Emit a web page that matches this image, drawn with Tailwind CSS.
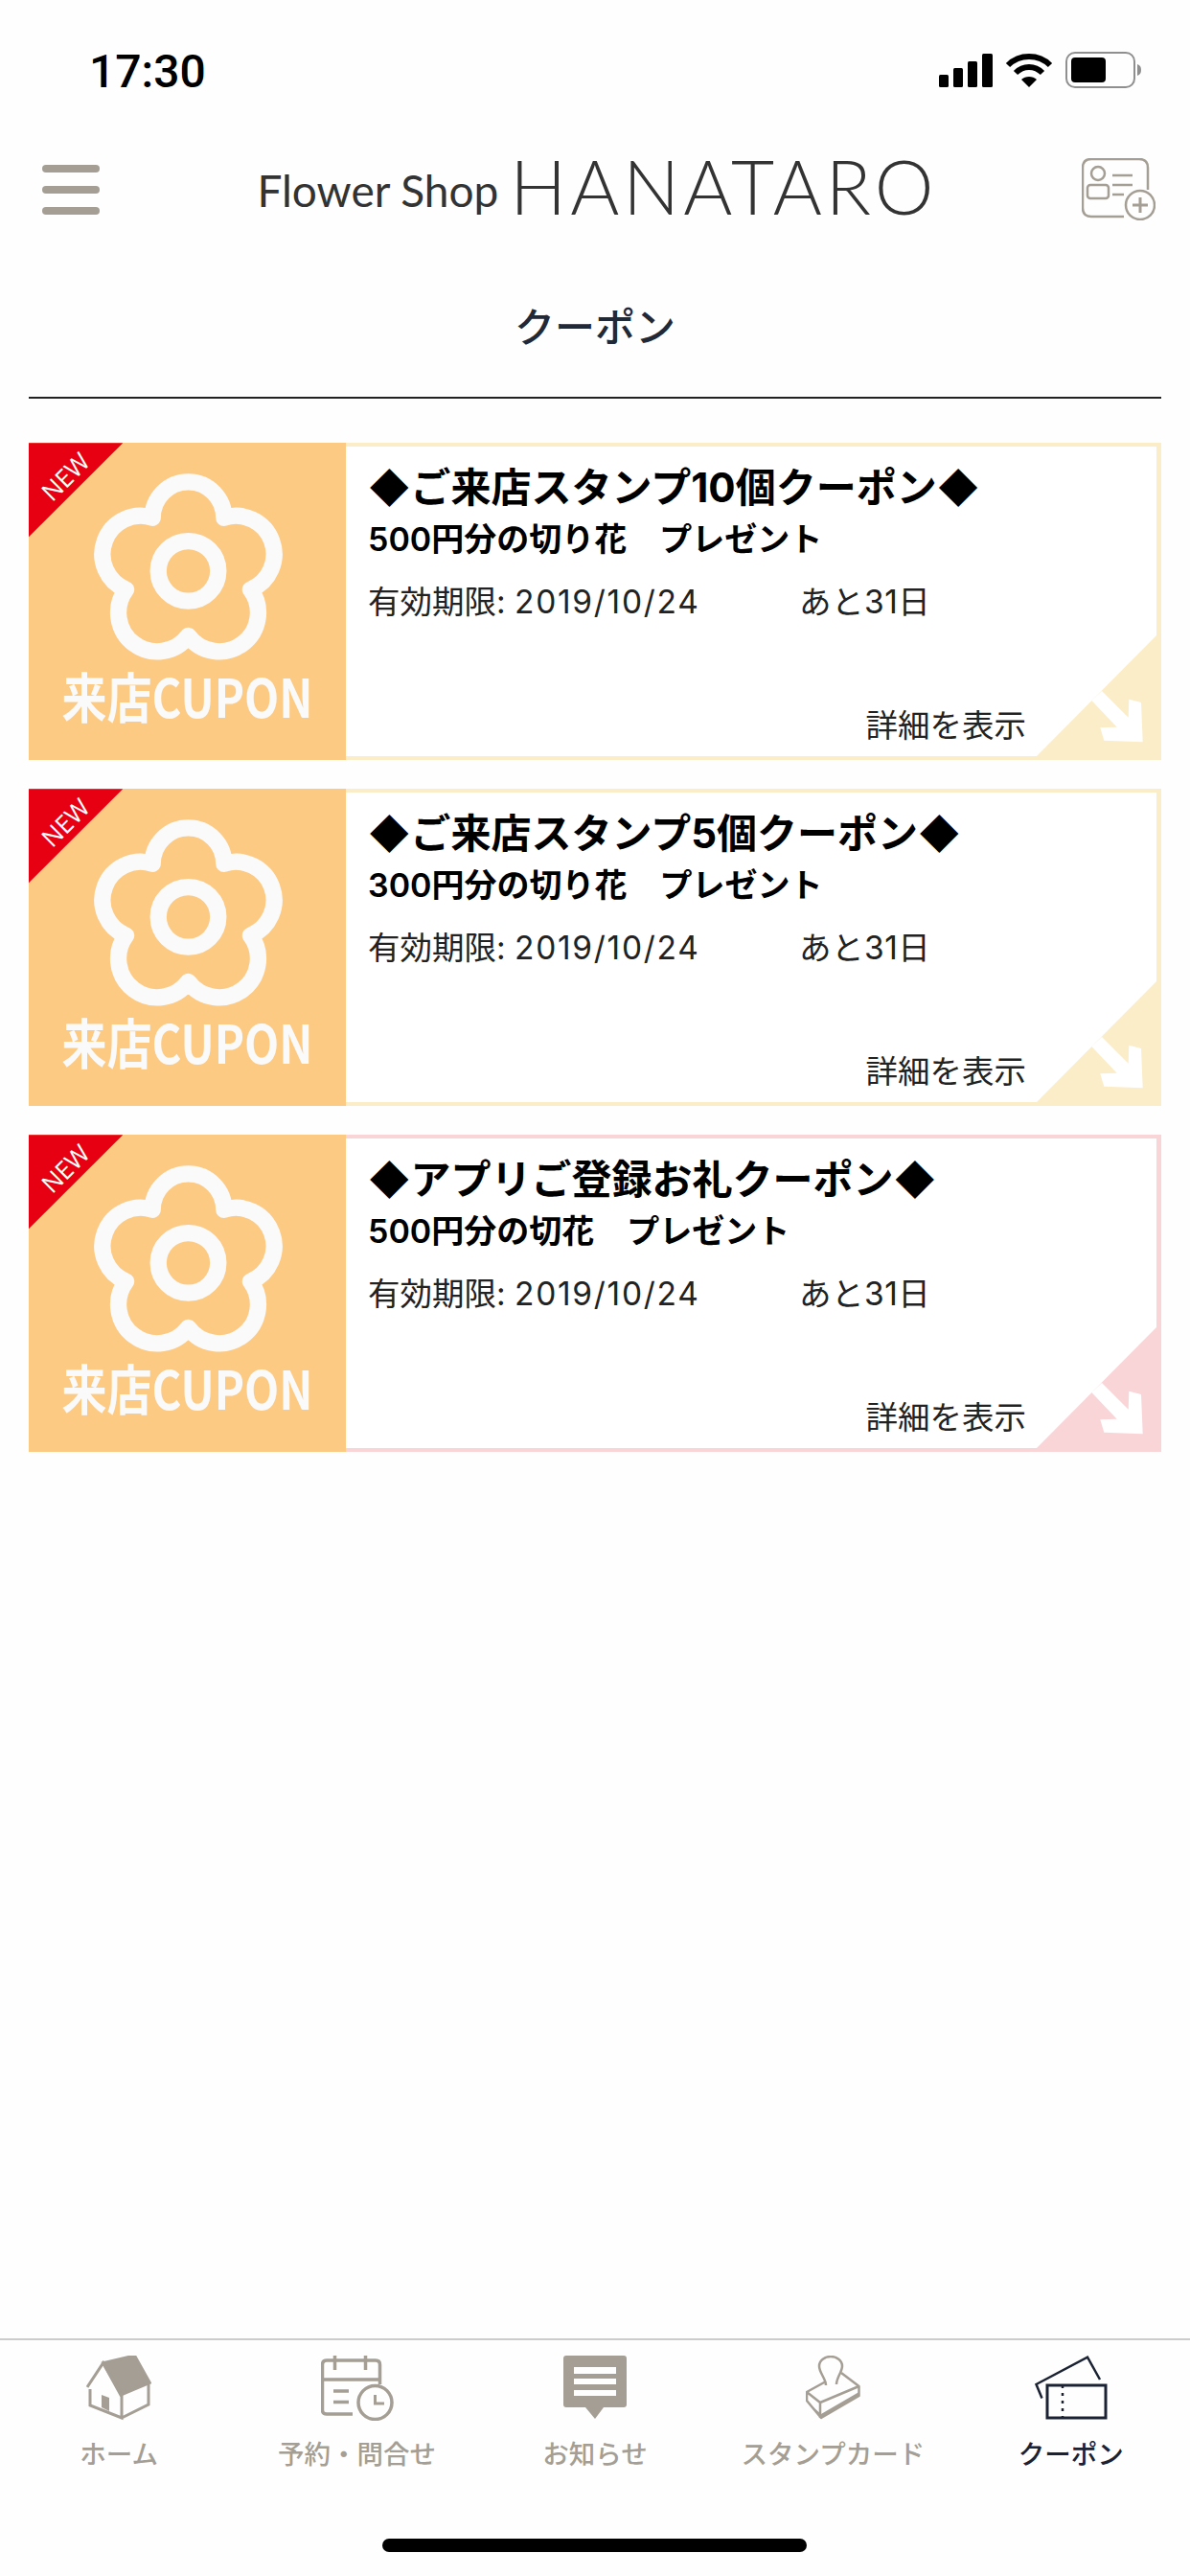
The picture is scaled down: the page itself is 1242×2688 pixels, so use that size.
<!DOCTYPE html>
<html lang="ja">
<head>
<meta charset="UTF-8">
<title>クーポン</title>
<script src="https://cdn.jsdelivr.net/npm/@tailwindcss/browser@4"></script>
</head>
<body class="bg-[#fefefe] text-black font-['Noto_Sans_CJK_JP',sans-serif]">
<div class="w-[1242px] h-[2688px] flex flex-col overflow-hidden">

  <!-- Status bar -->
  <div class="h-[165px] shrink-0 flex items-start justify-between pt-[50px] pl-[93px] pr-[50px]">
    <span class="font-['Roboto',sans-serif] text-[48px] leading-[50px] font-medium">17:30</span>
    <div class="flex items-center gap-[13px] pt-[4px]">
      <svg width="56" height="35" viewBox="0 0 56 35"><rect x="0" y="22" width="10" height="13" rx="1.5"/><rect x="15" y="15" width="10" height="20" rx="1.5"/><rect x="30" y="8" width="10" height="27" rx="1.5"/><rect x="45" y="0" width="11" height="35" rx="1.5"/></svg>
      <svg width="50" height="37" viewBox="0 0 50 37" fill="none" stroke="#000" stroke-width="6"><path d="M3 13C15 1 35 1 47 13"/><path d="M11 21C19 13 31 13 39 21"/><path d="M25 36L17 28C21 24 29 24 33 28Z" fill="#000" stroke="none"/></svg>
      <svg width="80" height="38" viewBox="0 0 80 38"><rect x="1" y="1" width="71" height="36" rx="9" fill="none" stroke="#8f8f8f" stroke-width="2"/><rect x="6" y="6" width="36" height="26" rx="4"/><path d="M75 13C78 14 79 16 79 19C79 22 78 24 75 25Z" fill="#8f8f8f"/></svg>
    </div>
  </div>

  <!-- Header -->
  <header class="h-[65px] shrink-0 flex items-center justify-between pl-[44px] pr-[36px]">
    <div class="w-[60px] flex flex-col gap-[14px]">
      <div class="h-[8px] rounded-full bg-[#a49e94]"></div>
      <div class="h-[8px] rounded-full bg-[#a49e94]"></div>
      <div class="h-[8px] rounded-full bg-[#a49e94]"></div>
    </div>
    <div class="flex items-baseline gap-[12px] pt-[6px] pl-[14px] text-[#333333] font-['Lato',sans-serif] font-light">
      <span class="text-[46px] leading-[65px] font-normal -translate-y-[8px]">Flower Shop</span>
      <span class="text-[78px] leading-[65px] tracking-[4px]">HANATARO</span>
    </div>
    <svg width="77" height="65" viewBox="0 0 77 65" fill="none" stroke="#a49e94" stroke-width="2.5">
      <path d="M44 61H10Q1 61 1 52V10Q1 1 10 1H60Q69 1 69 10V33"/>
      <circle cx="17" cy="16" r="7"/>
      <rect x="6" y="28" width="22" height="14" rx="3"/>
      <path d="M32 18H53M32 28H53M32 38H44"/>
      <circle cx="61" cy="49" r="15"/>
      <path d="M61 41V57M53 49H69" stroke-width="3"/>
    </svg>
  </header>

  <!-- Page title -->
  <div class="shrink-0 mx-[30px] pt-[88px] pb-[54px] border-b-2 border-[#222222] text-center">
    <h1 class="text-[42px] leading-[42px] font-medium text-[#1f2937]">クーポン</h1>
  </div>

  <!-- Coupons -->
  <div class="mt-[46px] mx-[30px] flex flex-col gap-[30px] font-['Inter','Noto_Sans_CJK_JP',sans-serif]">

    <div class="h-[331px] flex">
      <div class="relative w-[331px] shrink-0 bg-[#fcca83] overflow-hidden">
        <svg class="absolute inset-0" width="331" height="331" viewBox="90 66 994 992">
          <path d="M90 66H385L90 360Z" fill="#e60012"/>
          <path d="M478 300A112 112 0 0 1 702 300A120 120 0 0 1 785 525A121.500 121.500 0 0 1 590 670A121.500 121.500 0 0 1 395 525A120 120 0 0 1 478 300Z" fill="none" stroke="#fafafa" stroke-width="52" stroke-linejoin="round"/>
          <circle cx="590" cy="467" r="94" fill="none" stroke="#fafafa" stroke-width="52"/>
        </svg>
        <span class="absolute left-[5px] top-[20px] w-[66px] text-center -rotate-45 font-['Open_Sans',sans-serif] text-[26px] leading-[30px] text-white">NEW</span>
        <div class="absolute left-0 right-0 top-[228px] text-center text-[56px] leading-[70px] font-semibold text-[#fafafa] scale-x-[.84] whitespace-nowrap font-['Noto_Sans_CJK_JP',sans-serif]">来店CUPON</div>
      </div>
      <div class="relative flex-1 border-y-[4px] border-r-[5px] border-[#fcedc9]">
        <div class="h-full rounded-tr-[12px] bg-white pl-[23px] pt-[18px]">
          <div class="text-[42px] leading-[50px] font-bold">◆ご来店スタンプ10個クーポン◆</div>
          <div class="mt-[7px] text-[34px] leading-[44px] font-semibold">500円分の切り花　プレゼント</div>
          <div class="mt-[21px] flex text-[33.5px] leading-[44px] text-[#222222]"><span class="w-[450px]">有効期限: <span class="tracking-[1.7px]">2019/10/24</span></span><span class="tracking-[0.5px]">あと31日</span></div>
        </div>
        <span class="absolute right-[136px] bottom-[10px] text-[33.5px] leading-[44px] text-[#222222]">詳細を表示</span>
        <svg class="absolute right-[-5px] bottom-[-4px]" width="130" height="130" viewBox="0 0 130 130"><path d="M125 0H130V130H0V126Z" fill="#fcedc9"/><path d="M68 58L95.7 85.7L96.3 66.7L109 70L110.7 111.3L70.3 109.7L66.3 96.3L83.7 95.7L57.3 68Z" fill="#fff"/></svg>
      </div>
    </div>

    <div class="h-[331px] flex">
      <div class="relative w-[331px] shrink-0 bg-[#fcca83] overflow-hidden">
        <svg class="absolute inset-0" width="331" height="331" viewBox="90 66 994 992">
          <path d="M90 66H385L90 360Z" fill="#e60012"/>
          <path d="M478 300A112 112 0 0 1 702 300A120 120 0 0 1 785 525A121.500 121.500 0 0 1 590 670A121.500 121.500 0 0 1 395 525A120 120 0 0 1 478 300Z" fill="none" stroke="#fafafa" stroke-width="52" stroke-linejoin="round"/>
          <circle cx="590" cy="467" r="94" fill="none" stroke="#fafafa" stroke-width="52"/>
        </svg>
        <span class="absolute left-[5px] top-[20px] w-[66px] text-center -rotate-45 font-['Open_Sans',sans-serif] text-[26px] leading-[30px] text-white">NEW</span>
        <div class="absolute left-0 right-0 top-[228px] text-center text-[56px] leading-[70px] font-semibold text-[#fafafa] scale-x-[.84] whitespace-nowrap font-['Noto_Sans_CJK_JP',sans-serif]">来店CUPON</div>
      </div>
      <div class="relative flex-1 border-y-[4px] border-r-[5px] border-[#fcedc9]">
        <div class="h-full rounded-tr-[12px] bg-white pl-[23px] pt-[18px]">
          <div class="text-[42px] leading-[50px] font-bold">◆ご来店スタンプ5個クーポン◆</div>
          <div class="mt-[7px] text-[34px] leading-[44px] font-semibold">300円分の切り花　プレゼント</div>
          <div class="mt-[21px] flex text-[33.5px] leading-[44px] text-[#222222]"><span class="w-[450px]">有効期限: <span class="tracking-[1.7px]">2019/10/24</span></span><span class="tracking-[0.5px]">あと31日</span></div>
        </div>
        <span class="absolute right-[136px] bottom-[10px] text-[33.5px] leading-[44px] text-[#222222]">詳細を表示</span>
        <svg class="absolute right-[-5px] bottom-[-4px]" width="130" height="130" viewBox="0 0 130 130"><path d="M125 0H130V130H0V126Z" fill="#fcedc9"/><path d="M68 58L95.7 85.7L96.3 66.7L109 70L110.7 111.3L70.3 109.7L66.3 96.3L83.7 95.7L57.3 68Z" fill="#fff"/></svg>
      </div>
    </div>

    <div class="h-[331px] flex">
      <div class="relative w-[331px] shrink-0 bg-[#fcca83] overflow-hidden">
        <svg class="absolute inset-0" width="331" height="331" viewBox="90 66 994 992">
          <path d="M90 66H385L90 360Z" fill="#e60012"/>
          <path d="M478 300A112 112 0 0 1 702 300A120 120 0 0 1 785 525A121.500 121.500 0 0 1 590 670A121.500 121.500 0 0 1 395 525A120 120 0 0 1 478 300Z" fill="none" stroke="#fafafa" stroke-width="52" stroke-linejoin="round"/>
          <circle cx="590" cy="467" r="94" fill="none" stroke="#fafafa" stroke-width="52"/>
        </svg>
        <span class="absolute left-[5px] top-[20px] w-[66px] text-center -rotate-45 font-['Open_Sans',sans-serif] text-[26px] leading-[30px] text-white">NEW</span>
        <div class="absolute left-0 right-0 top-[228px] text-center text-[56px] leading-[70px] font-semibold text-[#fafafa] scale-x-[.84] whitespace-nowrap font-['Noto_Sans_CJK_JP',sans-serif]">来店CUPON</div>
      </div>
      <div class="relative flex-1 border-y-[4px] border-r-[5px] border-[#f9d5d8]">
        <div class="h-full rounded-tr-[12px] bg-white pl-[23px] pt-[18px]">
          <div class="text-[42px] leading-[50px] font-bold">◆アプリご登録お礼クーポン◆</div>
          <div class="mt-[7px] text-[34px] leading-[44px] font-semibold">500円分の切花　プレゼント</div>
          <div class="mt-[21px] flex text-[33.5px] leading-[44px] text-[#222222]"><span class="w-[450px]">有効期限: <span class="tracking-[1.7px]">2019/10/24</span></span><span class="tracking-[0.5px]">あと31日</span></div>
        </div>
        <span class="absolute right-[136px] bottom-[10px] text-[33.5px] leading-[44px] text-[#222222]">詳細を表示</span>
        <svg class="absolute right-[-5px] bottom-[-4px]" width="130" height="130" viewBox="0 0 130 130"><path d="M125 0H130V130H0V126Z" fill="#f9d5d8"/><path d="M68 58L95.7 85.7L96.3 66.7L109 70L110.7 111.3L70.3 109.7L66.3 96.3L83.7 95.7L57.3 68Z" fill="#fff"/></svg>
      </div>
    </div>
  </div>

  <!-- Tab bar -->
  <nav class="mt-auto relative h-[248px] shrink-0 border-t-2 border-[#cccccc] grid grid-cols-5 pt-[16px] items-start text-[27.5px] leading-[34px] font-medium text-[#a49e94]">
    <div class="flex flex-col items-center gap-[16px]">
      <svg width="68" height="68" viewBox="0 0 68 68" fill="none" stroke="#a49e94" stroke-width="3">
        <path d="M17.7 7.7L50.5 0L66.3 28.3L36 41Z" fill="#a49e94"/>
        <path d="M1 33L17.7 7.7L37 41V65L4 52V35M37 65L65 51V30"/>
        <path d="M16 41L24 44V58L16 54Z" fill="#a49e94" stroke="none"/>
      </svg>
      <span>ホーム</span>
    </div>
    <div class="flex flex-col items-center gap-[16px]">
      <svg width="76" height="68" viewBox="0 0 76 68" fill="none" stroke="#a49e94" stroke-width="3.5">
        <path d="M33 61H6Q1.500 61 1.500 57V9.500Q1.500 5 6 5H57Q61.500 5 61.500 9.500V30M1.500 25H61.500M14.500 0V15M46.500 0V15M13 37H29M13 48.500H29"/>
        <circle cx="56.500" cy="49" r="17.500"/>
        <path d="M56.500 41V50H66" stroke-width="3"/>
      </svg>
      <span>予約・問合せ</span>
    </div>
    <div class="flex flex-col items-center gap-[16px]">
      <svg width="66" height="68" viewBox="0 0 66 68">
        <path d="M3 0H63Q66 0 66 3V51Q66 54 63 54H42L33 66L23 54H3Q0 54 0 51V3Q0 0 3 0Z" fill="#a49e94"/>
        <path d="M11 12H55V19H11ZM11 24H55V30H11ZM11 36H55V42H11Z" fill="#fefefe"/>
      </svg>
      <span>お知らせ</span>
    </div>
    <div class="flex flex-col items-center gap-[16px]">
      <svg width="57" height="68" viewBox="0 0 57 68" fill="none" stroke="#a49e94" stroke-width="2.5" stroke-linejoin="round">
        <path d="M21 31C21 24 14 18 14 11C14 5 20 1 26 1C32 1 38 5 38 11C38 17 32 23 32 30"/>
        <path d="M21 27L1 38V47L16 65L55.500 42V32L37 18M1 38L15 49L55.500 32M15 49V65"/>
        <path d="M3 50L16 65L55.500 42V38L16 61Z" fill="#a49e94" stroke="none"/>
      </svg>
      <span>スタンプカード</span>
    </div>
    <div class="flex flex-col items-center gap-[16px] text-[#1a2233]">
      <svg width="76" height="68" viewBox="0 0 76 68" fill="none" stroke="#1a2233" stroke-width="3">
        <rect x="13" y="31" width="61" height="34"/>
        <path d="M29 31V65" stroke-dasharray="3 5" stroke-width="2.500"/>
        <path d="M7.500 44.500L1.500 30L55 1.700L68 25" stroke-width="2.500"/>
      </svg>
      <span>クーポン</span>
    </div>
    <div class="absolute left-[399px] bottom-[25px] w-[443px] h-[14px] rounded-full bg-black"></div>
  </nav>
</div>
</body>
</html>
